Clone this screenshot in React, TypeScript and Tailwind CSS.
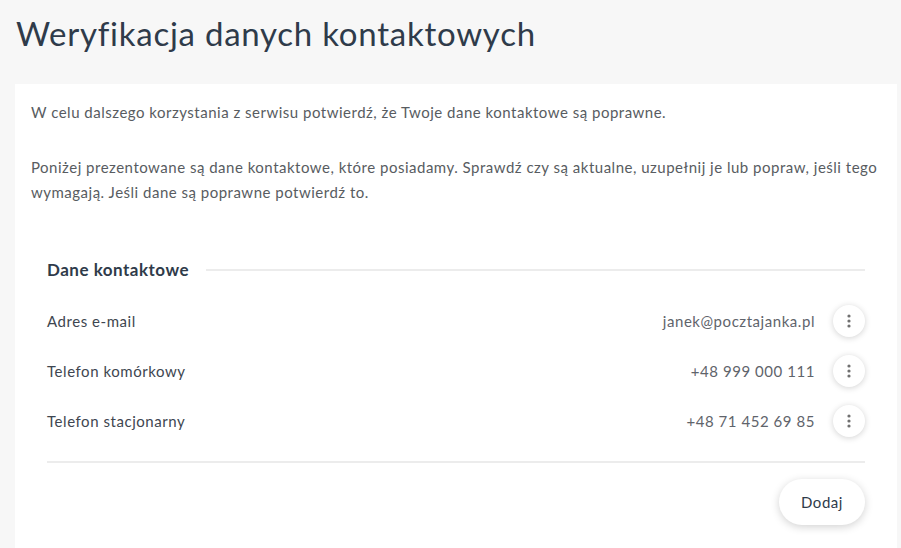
import React from "react";

const rows = [
  { label: "Adres e-mail", value: "janek@pocztajanka.pl" },
  { label: "Telefon komórkowy", value: "+48 999 000 111" },
  { label: "Telefon stacjonarny", value: "+48 71 452 69 85" },
];

function Dots() {
  return (
    <svg width="4" height="14" viewBox="0 0 4 14" fill="#707070">
      <circle cx="2" cy="2" r="1.6" />
      <circle cx="2" cy="7" r="1.6" />
      <circle cx="2" cy="12" r="1.6" />
    </svg>
  );
}

export default function App() {
  return (
    <div className="min-h-[548px] bg-[#f7f7f7] font-['Lato',sans-serif] overflow-hidden">
      <h1 className="pl-4 pt-[12px] h-[84px] text-[33px] leading-[42px] tracking-[0.75px] text-[#2f3b4a]">
        Weryfikacja danych kontaktowych
      </h1>
      <div className="ml-[15px] w-[882px] bg-white pl-4 pr-4 pt-[16px] pb-10 min-h-[464px]">
        <p className="text-[15px] leading-[25px] tracking-[0.5px] text-[#585c61]">
          W celu dalszego korzystania z serwisu potwierdź, że Twoje dane kontaktowe są poprawne.
        </p>
        <p className="mt-[30px] text-[15px] leading-[25px] tracking-[0.5px] text-[#585c61]">
          Poniżej prezentowane są dane kontaktowe, które posiadamy. Sprawdź czy są aktualne, uzupełnij je lub popraw, jeśli tego wymagają. Jeśli dane są poprawne potwierdź to.
        </p>
        <div className="mx-4 mt-[51px]">
          <div className="flex items-center h-[28px]">
            <h2 className="text-[17px] font-bold tracking-[0.5px] text-[#2f3b4a] whitespace-nowrap">Dane kontaktowe</h2>
            <div className="ml-[17px] flex-1 h-[2px] bg-[#ececec]" />
          </div>
          <div className="mt-[12px] flex flex-col">
            {rows.map((r) => (
              <div key={r.label} className="flex items-center h-[50px]">
                <span className="flex-1 text-[15px] tracking-[0.55px] text-[#3e4650]">{r.label}</span>
                <span className="text-[15px] tracking-[0.55px] text-[#5f646b]">{r.value}</span>
                <button className="ml-[18px] w-[32px] h-[32px] rounded-full bg-white shadow-[0_1px_6px_rgba(0,0,0,0.18)] flex items-center justify-center">
                  <Dots />
                </button>
              </div>
            ))}
          </div>
          <div className="mt-[15px] h-[2px] bg-[#ececec]" />
          <div className="mt-[16px] flex justify-end">
            <button className="h-[46px] px-[22px] rounded-full bg-white shadow-[0_2px_8px_rgba(0,0,0,0.18)] text-[15px] tracking-[0.55px] text-[#2f3b4a]">
              Dodaj
            </button>
          </div>
        </div>
      </div>
    </div>
  );
}
